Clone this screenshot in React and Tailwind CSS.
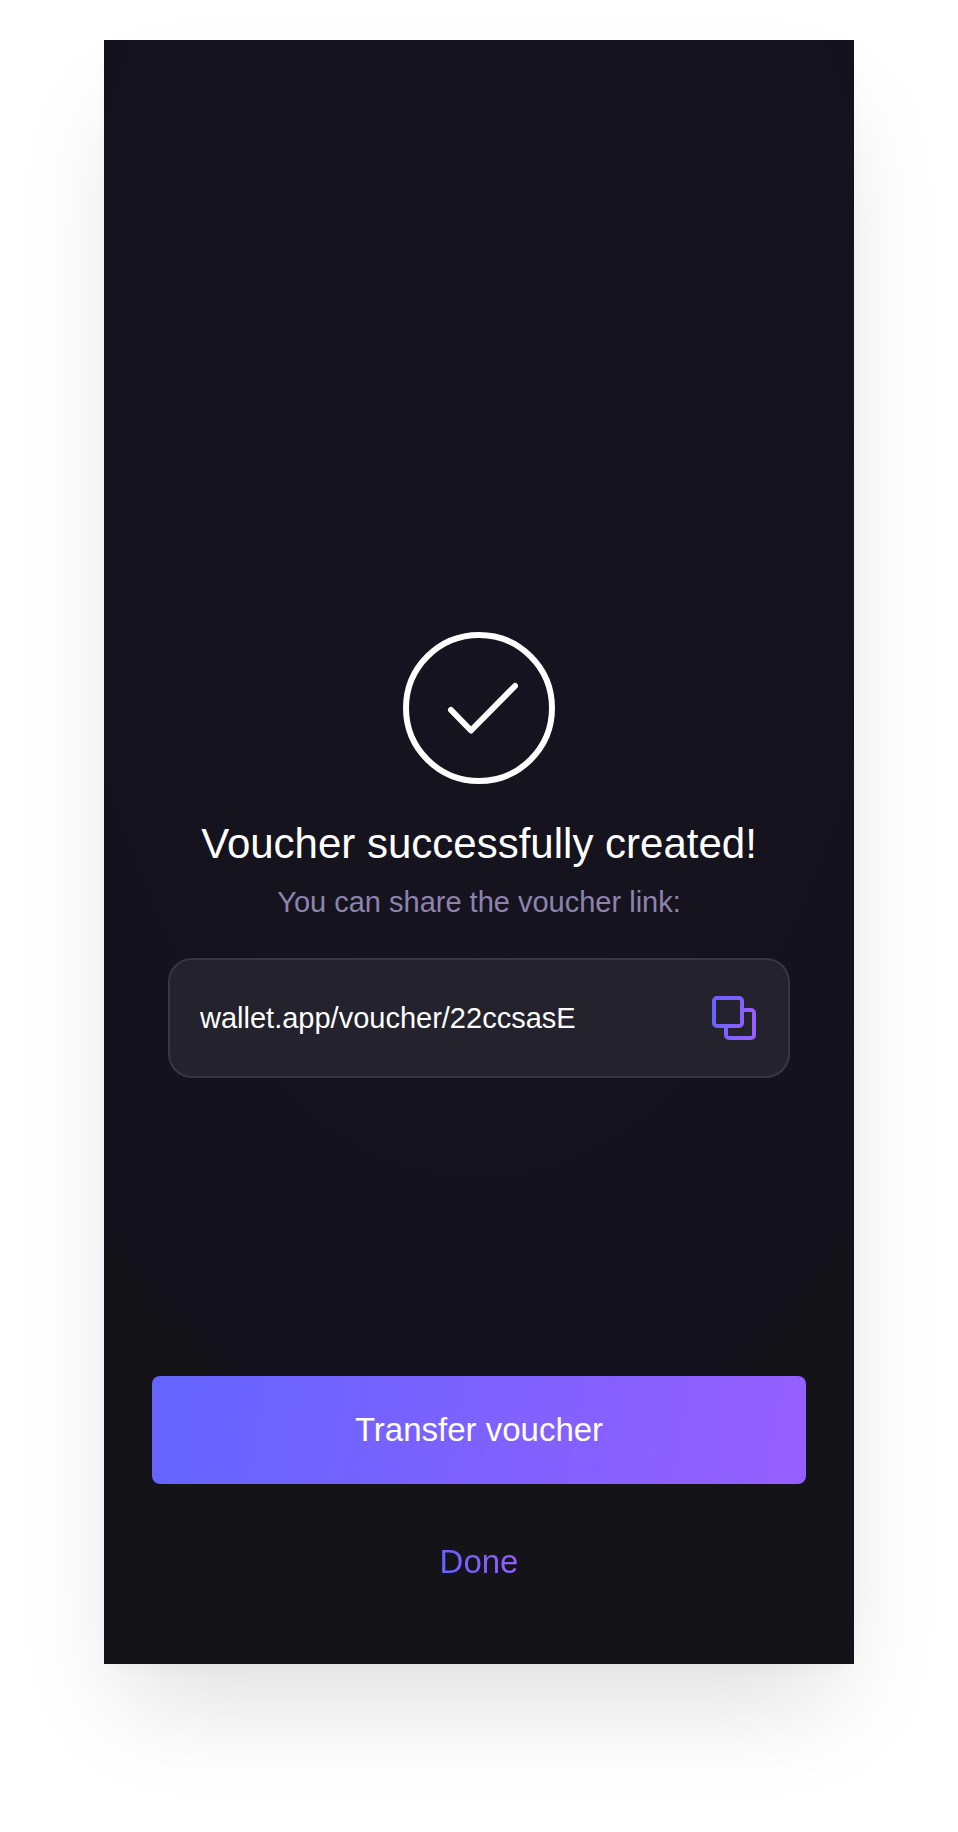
import { useRef } from "react";

const VOUCHER_LINK = "wallet.app/voucher/22ccsasE";

function SuccessIcon() {
  return (
    <svg className="size-[152px] shrink-0" viewBox="0 0 152 152" fill="none" stroke="white" strokeWidth="6" aria-hidden="true">
      <circle cx="76" cy="76" r="73" />
      <path d="M48 78l20 20.500L112 54" strokeLinecap="round" strokeLinejoin="round" />
    </svg>
  );
}

function CopyIcon() {
  return (
    <svg className="size-11" viewBox="0 0 44 44" fill="none" stroke="url(#copy-gradient)" strokeWidth="4" aria-hidden="true">
      <defs>
        <linearGradient id="copy-gradient" x1="0" y1="0" x2="44" y2="10" gradientUnits="userSpaceOnUse">
          <stop stopColor="#6464ff" />
          <stop offset="1" stopColor="#965fff" />
        </linearGradient>
      </defs>
      <rect x="2" y="2" width="28" height="28" rx="3" />
      <path d="M30 14h9a3 3 0 0 1 3 3v22a3 3 0 0 1-3 3H17a3 3 0 0 1-3-3v-9" />
    </svg>
  );
}

function LinkField({ value }) {
  const inputRef = useRef(null);

  const copy = () => {
    inputRef.current?.select();
    navigator.clipboard?.writeText(value);
  };

  return (
    <div className="flex h-[120px] w-full items-center gap-4 rounded-3xl border-2 border-[#383640] bg-[#24222c] pr-8 pl-[30px]">
      <input
        ref={inputRef}
        id="voucher-link"
        type="text"
        readOnly
        value={value}
        className="min-w-0 flex-1 bg-transparent text-[29px] leading-9 text-white outline-none"
      />
      <button type="button" aria-label="Copy link" onClick={copy} className="shrink-0 cursor-pointer">
        <CopyIcon />
      </button>
    </div>
  );
}

export default function App() {
  return (
    <div className="flex min-h-screen flex-col bg-white px-4 pt-10 pb-[168px] font-['Liberation_Sans',Arial,sans-serif] sm:px-[104px]">
      <main className="mx-auto flex w-full max-w-[750px] flex-1 flex-col bg-[#141318] bg-[radial-gradient(ellipse_590px_1030px_at_50%_25%,#161420_0%,#14121c_98%,#141318_100%)] px-12 pb-12 shadow-[0_56px_100px_-20px_rgba(0,0,0,0.13),0_6px_16px_-6px_rgba(0,0,0,0.04)]">
        <section className="flex flex-1 flex-col items-center justify-center px-4 pt-[294px] text-center">
          <SuccessIcon />
          <h1 className="mt-9 text-[42px] leading-[48px] text-white">Voucher successfully created!</h1>
          <label htmlFor="voucher-link" className="mt-4 mb-[38px] text-[29px] leading-9 text-[#8d84ae]">
            You can share the voucher link:
          </label>
          <LinkField value={VOUCHER_LINK} />
        </section>

        <div className="flex flex-col gap-6 text-[33px] leading-10">
          <button
            type="button"
            className="h-[108px] cursor-pointer rounded-lg bg-[linear-gradient(100deg,#6464ff,#965fff)] text-white"
          >
            Transfer voucher
          </button>
          <button type="button" className="h-[108px] cursor-pointer">
            <span className="bg-[linear-gradient(100deg,#6464ff,#965fff)] bg-clip-text text-transparent">Done</span>
          </button>
        </div>
      </main>
    </div>
  );
}
